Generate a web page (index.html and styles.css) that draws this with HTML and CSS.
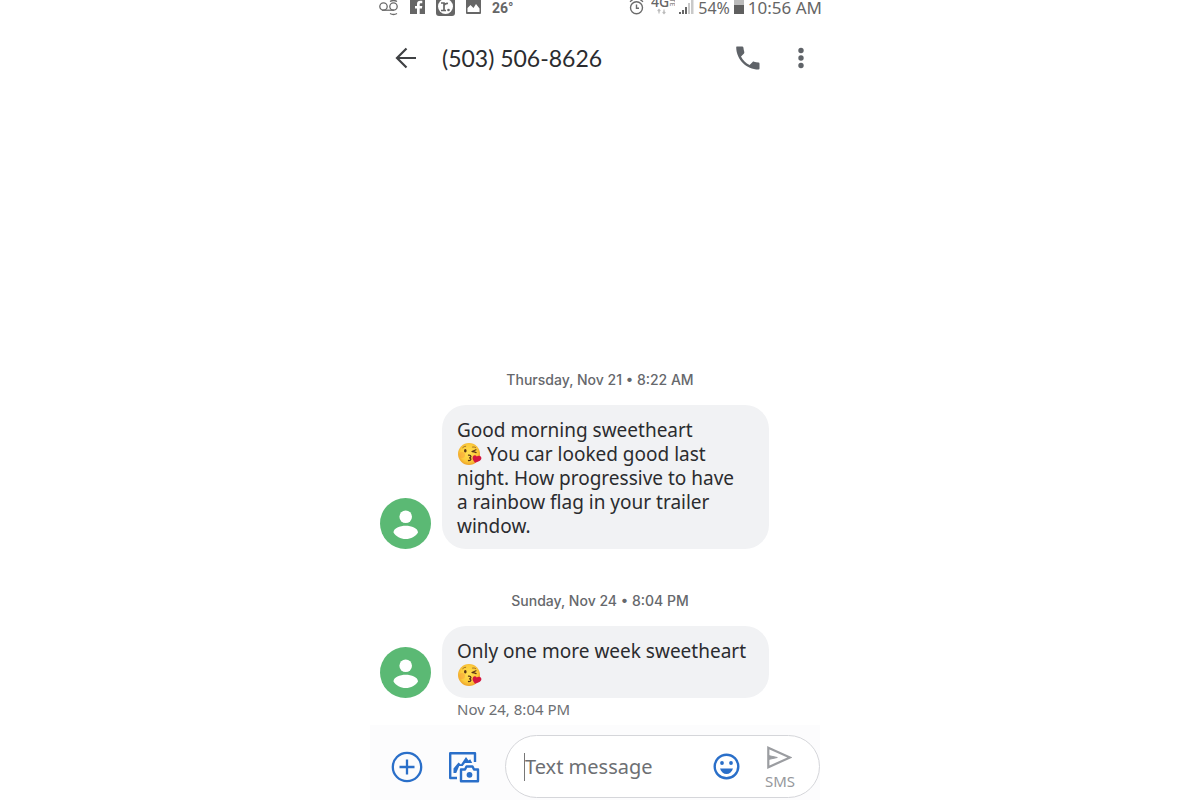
FILE: index.html
```html
<!DOCTYPE html>
<html lang="en">
<head>
<meta charset="utf-8">
<meta name="viewport" content="width=device-width, initial-scale=1">
<title>(503) 506-8626</title>
<link rel="stylesheet" href="styles.css">
</head>
<body>
<svg class="sprite" aria-hidden="true">
  <defs>
    <radialGradient id="face" cx="50%" cy="45%" r="55%">
      <stop offset="0" stop-color="#ffe052"/><stop offset=".7" stop-color="#fccb3a"/><stop offset="1" stop-color="#eda22a"/>
    </radialGradient>
  </defs>
  <symbol id="kiss" viewBox="0 0 24 24">
    <circle cx="11.500" cy="12" r="11" fill="url(#face)"/>
    <circle cx="4.500" cy="13" r="3" fill="#f58b3c" opacity=".35"/>
    <ellipse cx="7.800" cy="8.800" rx="1.300" ry="1.700" fill="#5b3517"/>
    <path d="M5.200 5.600q1.400-1.400 3-1.400M15 5q1.800-.5 3.200.6" fill="none" stroke="#8a5a20" stroke-width=".8" stroke-linecap="round"/>
    <path d="M14.500 9.500l4-1.700M14.800 9.600q2 .2 3.800 1" fill="none" stroke="#5b3517" stroke-width="1.200" stroke-linecap="round"/>
    <path d="M11 13.200c3-.3 3.200 2.400.7 2.600 2.500.2 2.200 3-.7 2.700" fill="none" stroke="#5b3517" stroke-width="1.300" stroke-linecap="round"/>
    <path d="M17.500 20.700c-2.400-2.600-2.900-4.700-2.100-6.200 1-1.700 3-1.500 3.900 0 1.500-1.500 4-1 4.500 1 .6 2.500-2.300 4.200-6.300 5.200z" fill="#d3163f"/>
  </symbol>
  <symbol id="person" viewBox="0 0 51 51">
    <circle cx="25.500" cy="25.500" r="25.500" fill="#5bb974"/>
    <circle cx="25.700" cy="18.700" r="6.300" fill="#fff"/>
    <path d="M13.500 34.500c0-4.600 6.500-6.800 12.200-6.800S38 29.900 38 34.500c-2.500 4-7 6.500-12.300 6.500s-9.700-2.500-12.200-6.500z" fill="#fff"/>
  </symbol>
</svg>

<div class="phone">
  <div class="status">
    <div class="status-group notices">
      <svg width="20" height="16" viewBox="0 0 20 16" fill="none" stroke="#6b6b6b" stroke-width="1.300"><circle cx="4.500" cy="6.500" r="3.700"/><path d="M3 10.200h12"/><circle cx="14.500" cy="6.500" r="3.700"/><path d="M11 1.500q3.500-2 7 0M11 13.500q3.500 2 7 0"/></svg>
      <svg width="15" height="16" viewBox="0 0 15 16"><path d="M0 0h15v14H0z" fill="#666"/><path d="M7 14V8.500H5V6h2V4.200C7 1.800 8.300.8 10.300.8h2v2.400h-1.400c-.9 0-1.200.4-1.200 1.200V6h2.600l-.4 2.500H9.700V14z" fill="#fff"/></svg>
      <svg width="19" height="16" viewBox="0 0 19 16"><rect y="-4" width="19" height="20" rx="3" fill="#666"/><circle cx="9.500" cy="6.500" r="7.500" fill="#fff"/><path d="M5 3h3v7.500M5 10.500h5M8 5.500Q9 3 12 3.500" fill="none" stroke="#666" stroke-width="1.700"/><circle cx="12.500" cy="10" r="1.300" fill="#666"/></svg>
      <svg width="15" height="16" viewBox="0 0 15 16"><path d="M0-2h14q1 0 1 1v14q0 1-1 1H1q-1 0-1-1z" fill="#666"/><path d="M1.500 12V8l3-3 3 3 2.500-4 3.500 4.500V12z" fill="#fff"/></svg>
      <span class="temperature">26°</span>
    </div>
    <div class="status-group">
      <svg width="15" height="16" viewBox="0 0 15 16" fill="none" stroke="#6b6b6b" stroke-width="1.400"><circle cx="7.500" cy="7.800" r="6"/><path d="M7.500 4.500v3.800H10M1 1.800L3.800-.5M14 1.800L11.200-.5"/></svg>
      <svg class="network" width="24" height="16" viewBox="0 0 24 16"><text x="0" y="7" class="network-name">4G</text><text transform="translate(19 -5) rotate(90)" class="network-lte">LTE</text><path d="M8 13.500V9.500M6.700 11L8 9.500 9.300 11M13 9.500v4M11.700 12l1.300 1.500 1.300-1.500" fill="none" stroke="#bbb" stroke-width="1.200"/></svg>
      <svg width="15" height="16" viewBox="0 0 15 16"><path d="M0 12h2v2H0zM3 10h2v4H3zM6 7h2v7H6z" fill="#666"/><path d="M9 3h2v11H9zM12-1h2.500v15H12z" fill="#c9c9c9"/></svg>
      <span class="battery">54%</span>
      <svg width="10" height="16" viewBox="0 0 10 16"><path d="M0 0h10v6H0z" fill="#bbb"/><path d="M0 5h10v9H0z" fill="#5f5f5f"/></svg>
      <span>10:56 AM</span>
    </div>
  </div>

  <header class="header">
    <button class="icon-button" aria-label="Back"><svg width="22" height="22" viewBox="0 0 22 22" fill="none" stroke="#3f4144" stroke-width="2.200"><path d="M21 11H2.500M11.500 1.500L2 11l9.500 9.500"/></svg></button>
    <h1 class="title">(503) 506-8626</h1>
    <button class="icon-button" aria-label="Call"><svg width="24" height="24" viewBox="0 0 24 24"><path d="M.7.500h5.500q1 0 1.200 1c.2 1.700.4 3 .9 4.500.1.500 0 1-.3 1.400L5 10.400c2 3.800 4.800 6.700 8.600 8.600l3-3c.4-.4.900-.5 1.400-.3 1.400.5 2.900.7 4.500.8q1 .1 1 1.200v4.800q0 1-1 1C10.300 23.500.5 13.700.2 1.500q0-1 .5-1z" fill="#5f6368"/></svg></button>
    <button class="icon-button" aria-label="More options"><svg width="6" height="22" viewBox="0 0 6 22" fill="#5f6368"><circle cx="3" cy="3.500" r="2.700"/><circle cx="3" cy="11" r="2.700"/><circle cx="3" cy="18.500" r="2.700"/></svg></button>
  </header>

  <main class="thread">
    <p class="day">Thursday, Nov 21 • 8:22 AM</p>
    <div class="message">
      <svg class="avatar" role="img" aria-label="Contact"><use href="#person"/></svg>
      <p class="bubble">Good morning sweetheart<br><svg class="emoji" role="img" aria-label="Face blowing a kiss"><use href="#kiss"/></svg> You car looked good last night. How progressive to have a rainbow flag in your trailer window.</p>
    </div>
    <p class="day">Sunday, Nov 24 • 8:04 PM</p>
    <div class="message">
      <svg class="avatar" role="img" aria-label="Contact"><use href="#person"/></svg>
      <p class="bubble">Only one more week sweetheart <svg class="emoji" role="img" aria-label="Face blowing a kiss"><use href="#kiss"/></svg></p>
    </div>
    <p class="sent">Nov 24, 8:04 PM</p>
  </main>

  <form class="composer">
    <button type="button" class="icon-button" aria-label="Add"><svg width="32" height="32" viewBox="0 0 32 32" fill="none" stroke="#2a6fc9" stroke-width="2.300"><circle cx="16" cy="16" r="14.200"/><path d="M16 8.500v15M8.500 16h15"/></svg></button>
    <button type="button" class="icon-button" aria-label="Attach photo"><svg width="32" height="32" viewBox="0 0 32 32" fill="none" stroke="#2a6fc9" stroke-width="2.400"><path d="M27 11V2.200H2.200V27H9" stroke-linejoin="round"/><path d="M5.500 22v-4.500l5-6 2.500 2 5-7.500 2.500 3.500 1.700-1.200 2 3.700H17l-2.300 3h-3.500l-3 7z" fill="#2a6fc9" stroke="none"/><path d="M13 18.500h4l1.500-3h6l1.500 3h4v11.700H13z" stroke-linejoin="round"/><circle cx="21.500" cy="23.800" r="2.900" fill="#2a6fc9" stroke="none"/></svg></button>
    <div class="field">
      <input class="text" type="text" placeholder="Text message" aria-label="Text message">
      <button type="button" class="icon-button" aria-label="Emoji"><svg width="27" height="27" viewBox="0 0 27 27"><circle cx="13.500" cy="13.500" r="11.800" fill="none" stroke="#2a6fc9" stroke-width="2.400"/><circle cx="9" cy="10" r="1.900" fill="#2a6fc9"/><circle cx="18" cy="10" r="1.900" fill="#2a6fc9"/><path d="M7 15.500h13c-1 3.500-3.500 5.500-6.500 5.500S8 19 7 15.500z" fill="#2a6fc9"/></svg></button>
      <button type="button" class="send"><svg width="25" height="23" viewBox="0 0 25 23" fill="none" stroke="#9b9da1" stroke-width="2.200"><path d="M1.300 1.800L23 11.500 1.300 21.200z"/><path d="M1.300 9.500l9 2-9 2" fill="#9b9da1" stroke-width="1"/></svg><span>SMS</span></button>
    </div>
  </form>
</div>
</body>
</html>
```
FILE: styles.css
```css
* { box-sizing: border-box; }
body { margin: 0; background: #fff; color: #2b2c2f; font-family: "Noto Sans", sans-serif; }
h1, p { margin: 0; }
button { padding: 0; border: 0; background: none; font: inherit; color: inherit; cursor: pointer; }
svg { display: block; flex: none; }
.sprite { position: absolute; width: 0; height: 0; }

.phone { display: flex; flex-direction: column; max-width: 460px; min-height: 100vh; margin: 0 auto; }

.status { display: flex; justify-content: space-between; height: 16px; padding: 0 8px 0 9px; color: #666; font-size: 17px; line-height: 16px; }
.status-group { display: flex; align-items: center; gap: 4px; white-space: nowrap; }
.notices { gap: 11px; }
.temperature { font-family: Roboto, sans-serif; font-size: 14px; font-weight: 700; }
.battery { font-size: 16px; }
.network { margin-left: 3px; }
.network-name { font: 500 14px "Noto Sans", sans-serif; fill: #666; }
.network-lte { font: 500 7px "Noto Sans", sans-serif; fill: #888; }

.header { display: flex; align-items: center; height: 84px; padding: 0 26px 0 25px; }
.icon-button { display: flex; align-items: center; justify-content: center; flex: none; }
.title { flex: 1; margin-left: 25px; font: 400 23px/28px Lato, sans-serif; }
.header .icon-button:nth-of-type(2) { margin-right: 38px; }

.thread { flex: 1; display: flex; flex-direction: column; justify-content: flex-end; padding: 0 10px 5px; }
.day { padding-bottom: 15px; color: #66686c; text-align: center; font: 500 14px/20px Inter, sans-serif; }
.message { display: flex; align-items: flex-end; gap: 11px; }
.message + .day { padding-top: 42px; }
.avatar { width: 51px; height: 51px; }
.bubble { flex: 0 1 327px; padding: 13px 21px 11px 15px; border-radius: 24px; background: #f1f2f4; font-size: 19px; line-height: 24px; }
.emoji { display: inline-block; width: 25px; height: 24px; vertical-align: bottom; }
.sent { margin: 1px 0 1px 77px; color: #6d6f73; font-size: 15px; line-height: 20px; }

.composer { display: flex; align-items: center; gap: 25px; margin-right: 10px; padding: 10px 0 2px 21px; background: #fcfcfd; }
.field { flex: 1; display: flex; align-items: center; min-width: 0; height: 63px; padding: 0 24px 0 18px; border: 1px solid #d5d6da; border-radius: 32px; background: #fff; }
.text { flex: 1; min-width: 0; height: 28px; padding: 0; border: 0; border-left: 1px solid #777; outline: 0; background: none; color: #2b2c2f; font: 400 20px/28px "Noto Sans", sans-serif; }
.text::placeholder { color: #6d6f73; opacity: 1; }
.send { display: flex; flex-direction: column; align-items: center; gap: 2px; margin-left: 25px; padding-top: 3px; color: #96989c; font-size: 15px; line-height: 20px; }
```
